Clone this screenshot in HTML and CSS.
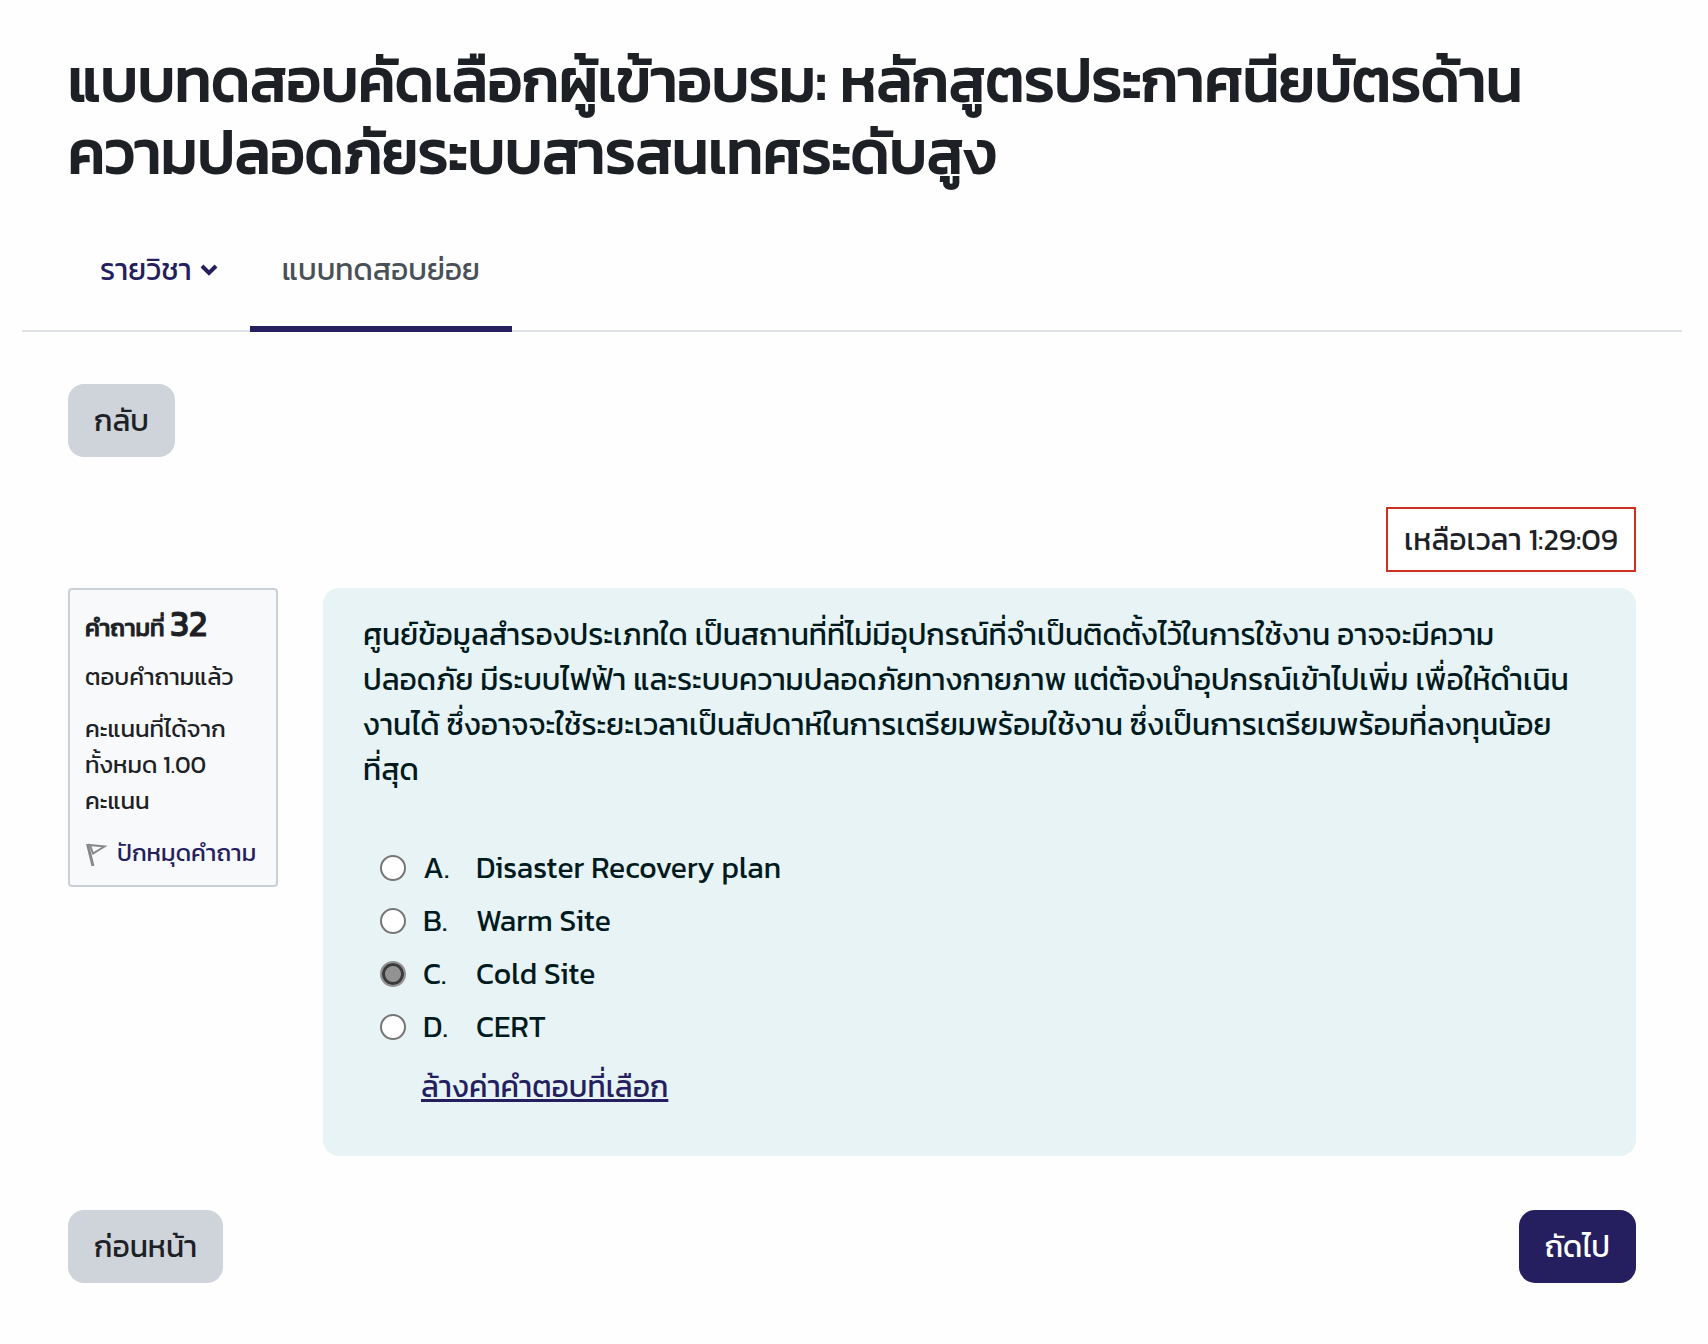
FILE: index.html
```html
<!DOCTYPE html>
<html lang="th">
<head>
<meta charset="UTF-8">
<title>แบบทดสอบย่อย</title>
<meta name="viewport" content="width=device-width,initial-scale=1">
<link rel="stylesheet" href="styles.css">
</head>
<body>
<header>
  <h1>แบบทดสอบคัดเลือกผู้เข้าอบรม: หลักสูตรประกาศนียบัตรด้าน<br>ความปลอดภัยระบบสารสนเทศระดับสูง</h1>
</header>

<nav class="tabs">
  <a href="#course" class="tab">รายวิชา
    <svg class="chevron" viewBox="0 0 18 12" aria-hidden="true"><path d="M2 2 L9 9 L16 2"/></svg>
  </a>
  <a href="#quiz" class="tab active">แบบทดสอบย่อย</a>
</nav>

<main>
  <button type="button" class="btn">กลับ</button>

  <div class="timer-row">
    <div class="timer" role="timer">เหลือเวลา 1:29:09</div>
  </div>

  <form>
    <div class="question">
      <!-- question info -->
      <aside class="info">
        <h3>คำถามที่ <span class="qno">32</span></h3>
        <div class="state">ตอบคำถามแล้ว</div>
        <div class="grade">คะแนนที่ได้จาก<br>ทั้งหมด 1.00<br>คะแนน</div>
        <a href="#flag" class="flag">
          <svg viewBox="0 0 24 26" aria-hidden="true"><path class="pole" d="M2.5 4 L8 26"/><path d="M5 5 L19.5 6.5 L8 13.5 Z"/></svg>
          <span>ปักหมุดคำถาม</span>
        </a>
      </aside>

      <!-- question text and answers -->
      <section class="formulation">
        <p class="qtext">ศูนย์ข้อมูลสำรองประเภทใด เป็นสถานที่ที่ไม่มีอุปกรณ์ที่จำเป็นติดตั้งไว้ในการใช้งาน อาจจะมีความ<br>ปลอดภัย มีระบบไฟฟ้า และระบบความปลอดภัยทางกายภาพ แต่ต้องนำอุปกรณ์เข้าไปเพิ่ม เพื่อให้ดำเนิน<br>งานได้ ซึ่งอาจจะใช้ระยะเวลาเป็นสัปดาห์ในการเตรียมพร้อมใช้งาน ซึ่งเป็นการเตรียมพร้อมที่ลงทุนน้อย<br>ที่สุด</p>
        <div class="answers">
          <div class="answer"><input type="radio" name="q32" id="a"><label for="a"><span class="num">A.</span>Disaster Recovery plan</label></div>
          <div class="answer"><input type="radio" name="q32" id="b"><label for="b"><span class="num">B.</span>Warm Site</label></div>
          <div class="answer"><input type="radio" name="q32" id="c" checked><label for="c"><span class="num">C.</span>Cold Site</label></div>
          <div class="answer"><input type="radio" name="q32" id="d"><label for="d"><span class="num">D.</span>CERT</label></div>
        </div>
        <a href="#clear" class="clear">ล้างค่าคำตอบที่เลือก</a>
      </section>
    </div>

    <div class="pager">
      <button type="button" class="btn">ก่อนหน้า</button>
      <button type="button" class="btn primary">ถัดไป</button>
    </div>
  </form>
</main>
</body>
</html>
```

FILE: styles.css
```css
:root{
  --fg:#1d2125;--brand:#251f5f;--grey:#ced4da;--line:#dee2e6;
  --font:Kanit,"Noto Sans Thai","Noto Sans",sans-serif;
}
*{box-sizing:border-box;margin:0}
body{font-family:var(--font);font-size:30px;line-height:45px;background:#fefefe;color:var(--fg);padding:44px 26px 60px 22px}
header{padding:0 46px}
/* headings: regular cut thickened with a stroke */
h1{font-size:60px;line-height:72px;font-weight:400;-webkit-text-stroke:2px;white-space:nowrap}
/* tabs */
.tabs{display:flex;margin-top:34px;height:110px;border-bottom:2px solid var(--line)}
.tab{display:flex;align-items:flex-start;gap:8px;height:110px;padding:25px 32px 0;color:var(--brand);text-decoration:none;white-space:nowrap}
.tab:first-child{margin-left:46px}
.tab.active{color:#495057;border-bottom:6px solid var(--brand)}
.chevron{width:18px;height:12px;margin-top:17px;fill:none;stroke:var(--brand);stroke-width:4}
main{padding:52px 46px 0}
.btn{display:block;font:inherit;color:var(--fg);background:var(--grey);border:0;border-radius:16px;padding:14px 26px;cursor:pointer}
.btn.primary{background:var(--brand);color:#fff}
.timer-row{display:flex;justify-content:flex-end;margin:50px 0 16px}
.timer{border:2px solid #ca3120;padding:8px 16px;background:#fff}
/* question */
.question{display:flex;align-items:flex-start;gap:45px}
.info{width:210px;flex:none;background:#f8f9fa;border:2px solid #cad0d7;border-radius:4px;padding:14px 15px;font-size:24px;line-height:36px;white-space:nowrap}
.info h3{font-size:24px;line-height:38px;font-weight:400;-webkit-text-stroke:1px}
.qno{font-size:36px}
.state{margin-top:12px}
.grade{margin-top:16px}
.flag{display:flex;align-items:center;gap:8px;margin-top:16px;color:var(--brand);text-decoration:none}
.flag svg{width:24px;height:26px;flex:none;fill:none;stroke:#888;stroke-width:2}
.flag .pole{stroke-width:3}
.formulation{flex:1;min-width:0;background:#e7f3f5;color:#001a1e;border-radius:16px;padding:24px 40px 47px}
.qtext{white-space:nowrap}
.answers{margin-top:49px;padding-left:17px}
.answer{display:flex;align-items:center;gap:17px;height:53px}
.answer label{display:flex}
.num{width:53px}
input[type=radio]{appearance:none;width:26px;height:26px;margin:0;border:2px solid #767676;border-radius:50%;background:#fff}
input[type=radio]:checked{border-color:#929292;background:#929292;box-shadow:inset 0 0 0 3px #3b3b3b}
.clear{display:block;width:max-content;margin:11px 0 0 58px;color:var(--brand);text-decoration:underline;text-decoration-thickness:3px}
.pager{display:flex;justify-content:space-between;margin-top:54px}
```
